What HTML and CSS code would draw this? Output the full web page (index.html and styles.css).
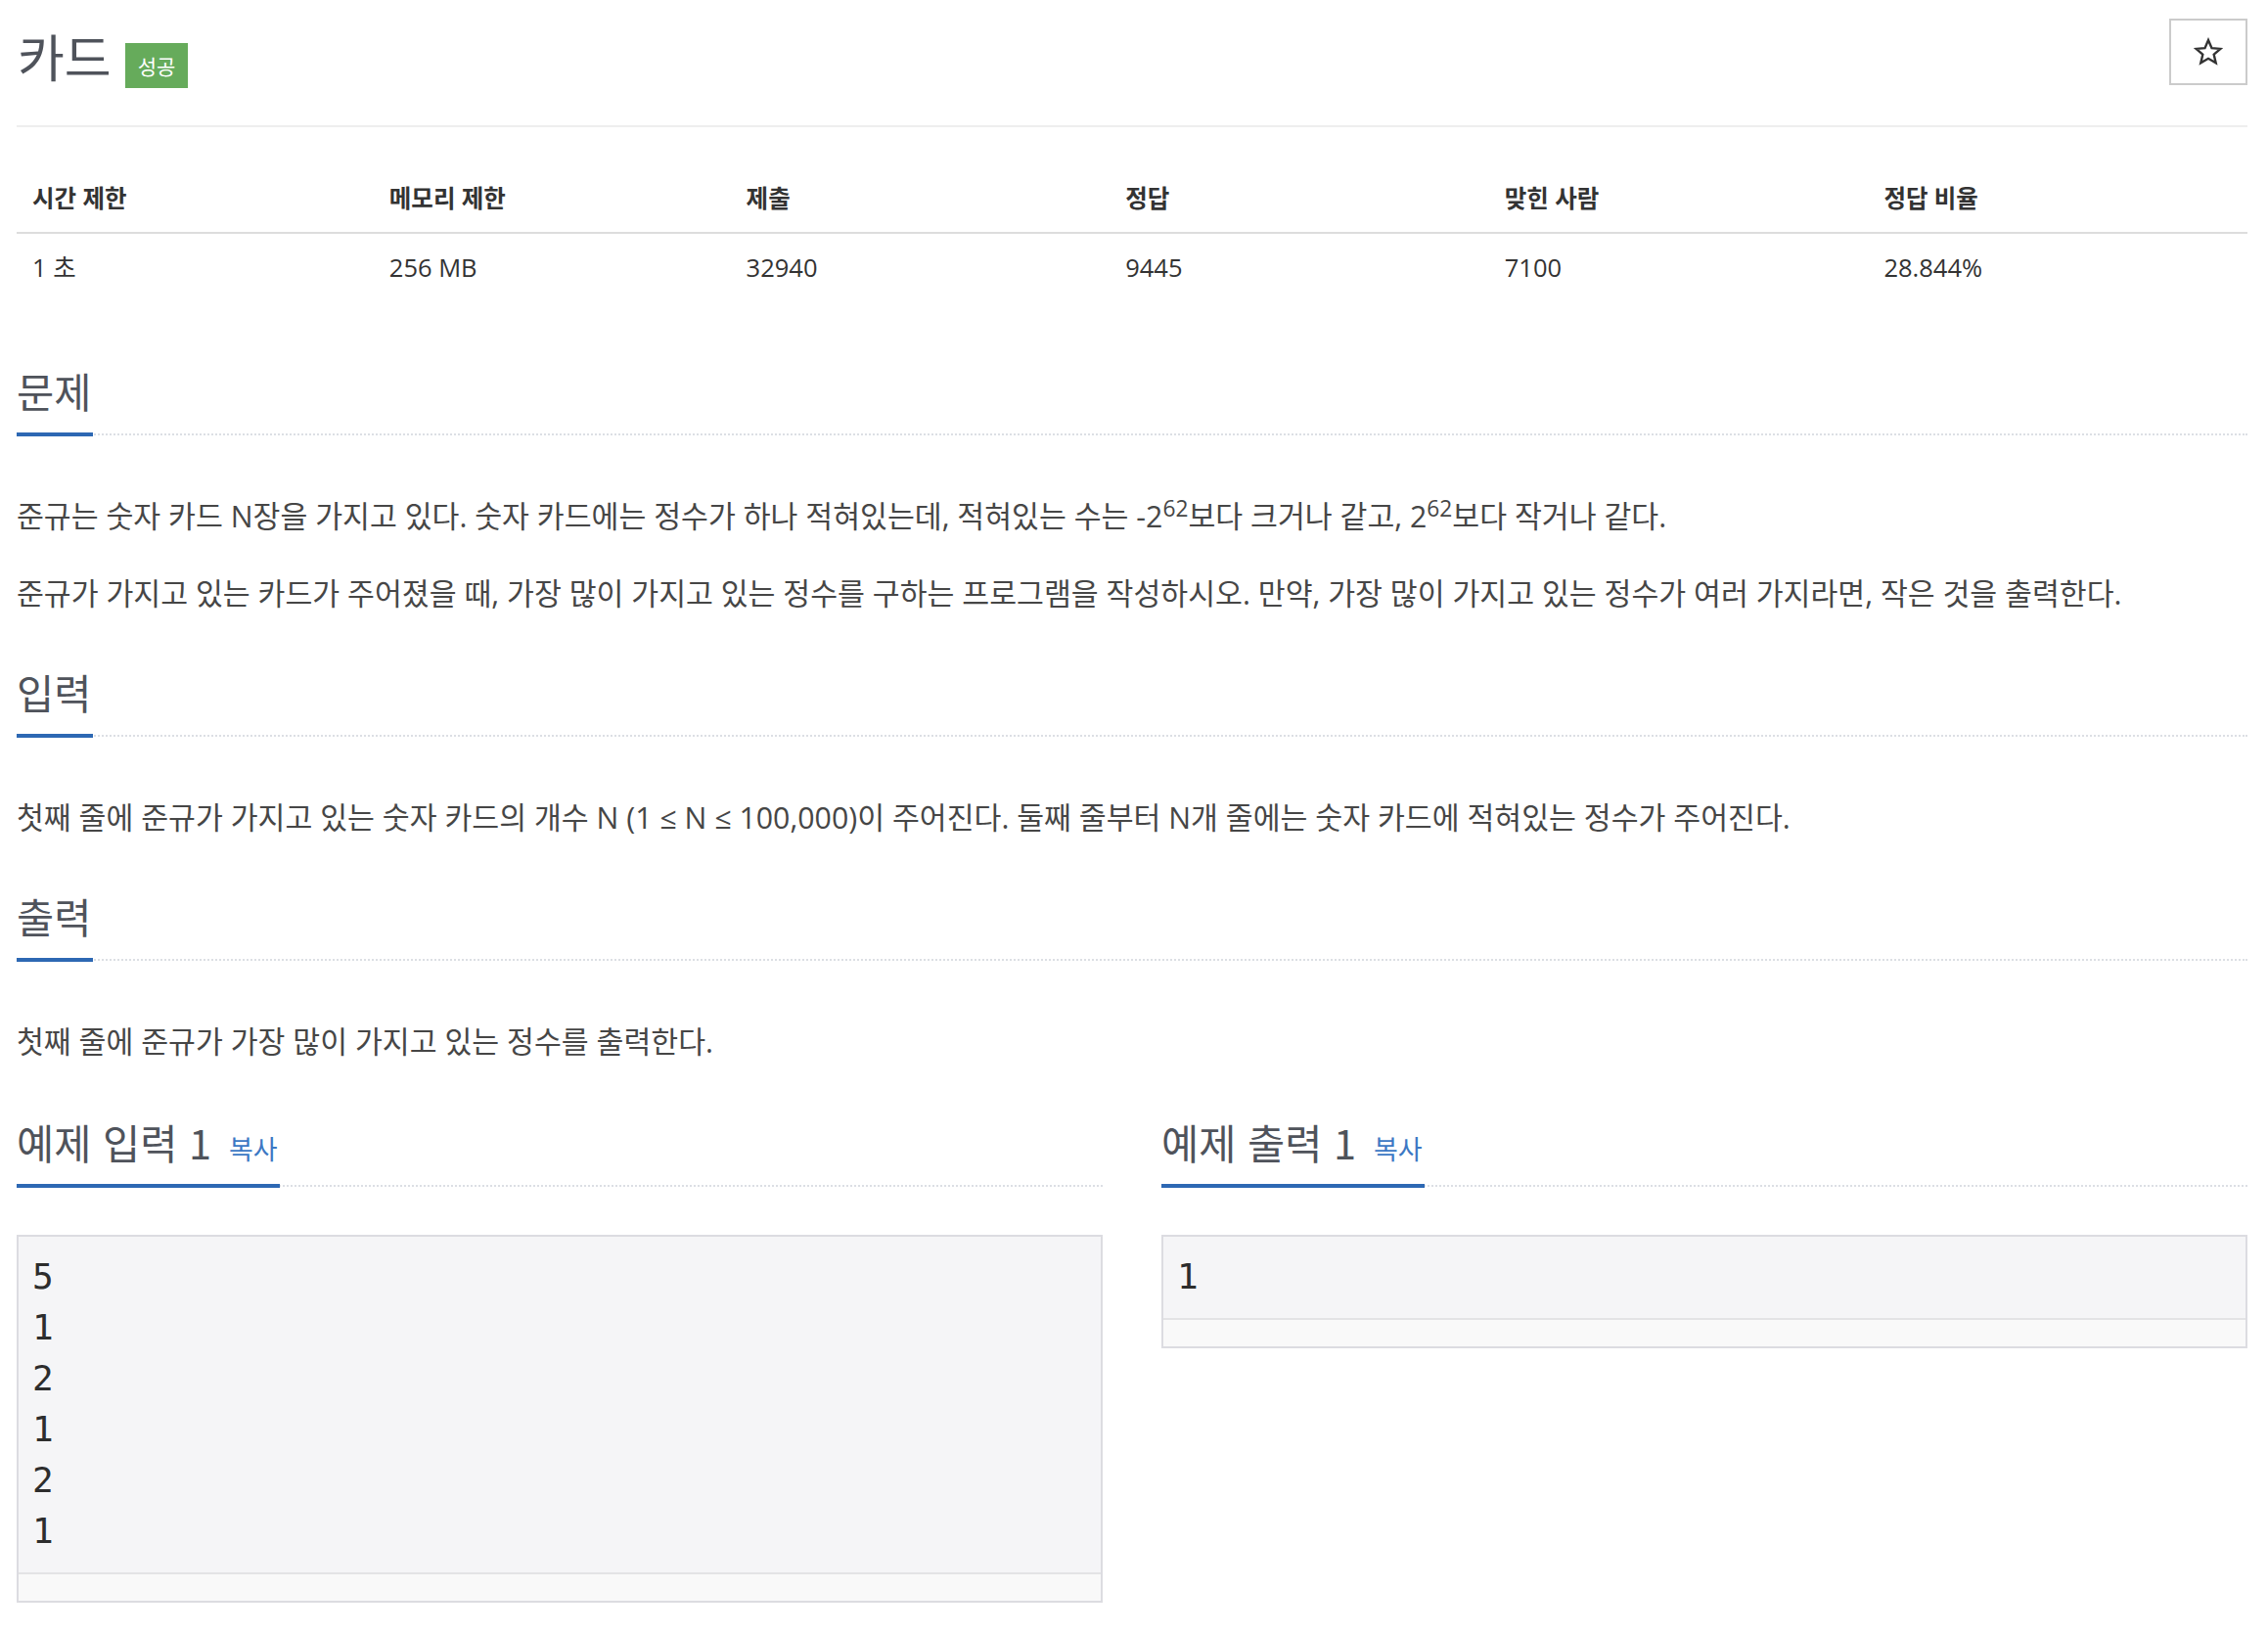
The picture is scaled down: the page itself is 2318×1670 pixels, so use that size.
FILE: index.html
```html
<!DOCTYPE html>
<html lang="ko">
<head>
<meta charset="utf-8">
<title>카드</title>
<link rel="stylesheet" href="styles.css">
</head>
<body>
<div class="page">
  <div class="page-header">
    <h1 class="title"><span class="title-text">카드</span><span class="badge">성공</span></h1>
    <button class="star-btn" type="button" aria-label="즐겨찾기">
      <svg width="30" height="30" viewBox="0 0 30 30"><path d="M15 3 L18.5 11.2 L27.4 11.9 L20.7 17.7 L22.7 26.4 L15 21.8 L7.3 26.4 L9.3 17.7 L2.6 11.9 L11.5 11.2 Z" fill="none" stroke="#333" stroke-width="2.4" stroke-linejoin="miter"/></svg>
    </button>
  </div>

  <table class="info">
    <thead>
      <tr><th class="c16">시간 제한</th><th class="c16">메모리 제한</th><th class="c17">제출</th><th class="c17">정답</th><th class="c17">맞힌 사람</th><th class="c17">정답 비율</th></tr>
    </thead>
    <tbody>
      <tr><td>1 초</td><td>256 MB</td><td>32940</td><td>9445</td><td>7100</td><td>28.844%</td></tr>
    </tbody>
  </table>

  <section class="sec sec-first">
    <div class="headline"><h2>문제</h2></div>
    <div class="desc">
      <p>준규는 숫자 카드 N장을 가지고 있다. 숫자 카드에는 정수가 하나 적혀있는데, 적혀있는 수는 -2<sup>62</sup>보다 크거나 같고, 2<sup>62</sup>보다 작거나 같다.</p>
      <p>준규가 가지고 있는 카드가 주어졌을 때, 가장 많이 가지고 있는 정수를 구하는 프로그램을 작성하시오. 만약, 가장 많이 가지고 있는 정수가 여러 가지라면, 작은 것을 출력한다.</p>
    </div>
  </section>

  <section class="sec">
    <div class="headline"><h2>입력</h2></div>
    <div class="desc">
      <p>첫째 줄에 준규가 가지고 있는 숫자 카드의 개수 N (1 ≤ N ≤ 100,000)이 주어진다. 둘째 줄부터 N개 줄에는 숫자 카드에 적혀있는 정수가 주어진다.</p>
    </div>
  </section>

  <section class="sec">
    <div class="headline"><h2>출력</h2></div>
    <div class="desc">
      <p>첫째 줄에 준규가 가장 많이 가지고 있는 정수를 출력한다.</p>
    </div>
  </section>

  <div class="samples">
    <section class="sample">
      <div class="headline"><h2>예제 입력 1<span class="copy">복사</span></h2></div>
      <div class="sampledata">
        <pre>5
1
2
1
2
1</pre>
        <div class="scrollbar"></div>
      </div>
    </section>
    <section class="sample">
      <div class="headline"><h2>예제 출력 1<span class="copy">복사</span></h2></div>
      <div class="sampledata">
        <pre>1</pre>
        <div class="scrollbar"></div>
      </div>
    </section>
  </div>
</div>
</body>
</html>
```

FILE: styles.css
```css
* { box-sizing: border-box; }

html, body {
  margin: 0;
  padding: 0;
  background: #fff;
}

body {
  font-family: "Open Sans", "Noto Sans CJK KR", sans-serif;
  color: #333;
}

.page {
  margin-left: 17px;
  width: 2280px;
}

/* header */
.page-header {
  display: flex;
  justify-content: space-between;
  align-items: flex-start;
  padding-top: 19px;
  height: 130px;
  border-bottom: 2px solid #eee;
}

.title {
  display: flex;
  align-items: flex-start;
  margin: 12px 0 0 0;
  font-weight: 400;
}

.title-text {
  font-family: "Noto Sans CJK KR", sans-serif;
  font-size: 52px;
  line-height: 52px;
  color: #4f535b;
  padding-left: 1px;
}

.badge {
  display: inline-block;
  margin: 13px 0 0 14px;
  height: 46px;
  line-height: 46px;
  padding: 0 13px;
  background: #66ab5b;
  color: #fff;
  font-family: "Noto Sans CJK KR", sans-serif;
  font-size: 21px;
  font-weight: 400;
}

.star-btn {
  width: 80px;
  height: 68px;
  border: 2px solid #cbcbcb;
  background: #fff;
  display: flex;
  align-items: center;
  justify-content: center;
  padding: 0;
  margin: 0;
}

/* info table */
.info {
  width: 100%;
  border-collapse: collapse;
  margin-top: 39px;
  color: #333;
}

.info .c16 { width: 16%; }
.info .c17 { width: 17%; }

.info th {
  text-align: left;
  font-weight: 700;
  font-size: 24.5px;
  line-height: 32px;
  padding: 18px 16px;
  border-bottom: 2px solid #ddd;
}

.info td {
  line-height: 32px;
  padding: 18px 16px;
  font-size: 25.5px;
}

/* sections */
.sec { margin-top: 56px; }
.sec-first { margin-top: 70px; }

.headline {
  border-bottom: 2px dotted #dcdfe4;
}

.headline h2 {
  display: inline-block;
  margin: 0 0 -3px 0;
  padding: 0 2px 21px 0;
  font-family: "Noto Sans CJK KR", sans-serif;
  font-size: 41.5px;
  line-height: 44px;
  font-weight: 400;
  color: #4f535b;
  border-bottom: 4px solid #2d68b3;
}

.desc {
  margin-top: 61px;
}

.desc p {
  margin: 0;
  font-size: 30.3px;
  line-height: 44px;
  color: #464646;
}

.desc p + p {
  margin-top: 35px;
}

.desc sup {
  font-size: 75%;
  line-height: 0;
  position: relative;
  top: -0.5em;
  vertical-align: baseline;
}

/* samples */
.samples {
  display: grid;
  grid-template-columns: 1fr 1fr;
  column-gap: 60px;
  margin-top: 58px;
}

.copy {
  display: inline-block;
  font-family: "Noto Sans CJK KR", sans-serif;
  font-size: 27px;
  line-height: 1;
  color: #3c78c4;
  margin-left: 18px;
}

.sampledata {
  margin-top: 49px;
  border: 2px solid #dcdce1;
  background: #f5f5f7;
}

.sampledata pre {
  margin: 0;
  padding: 15px 14px 16px 14px;
  font-family: "DejaVu Sans Mono", monospace;
  font-size: 36px;
  line-height: 52px;
  color: #2d2d2d;
}

.scrollbar {
  height: 29px;
  border-top: 2px solid #e3e3e5;
  background: #f9f9f9;
}
```
